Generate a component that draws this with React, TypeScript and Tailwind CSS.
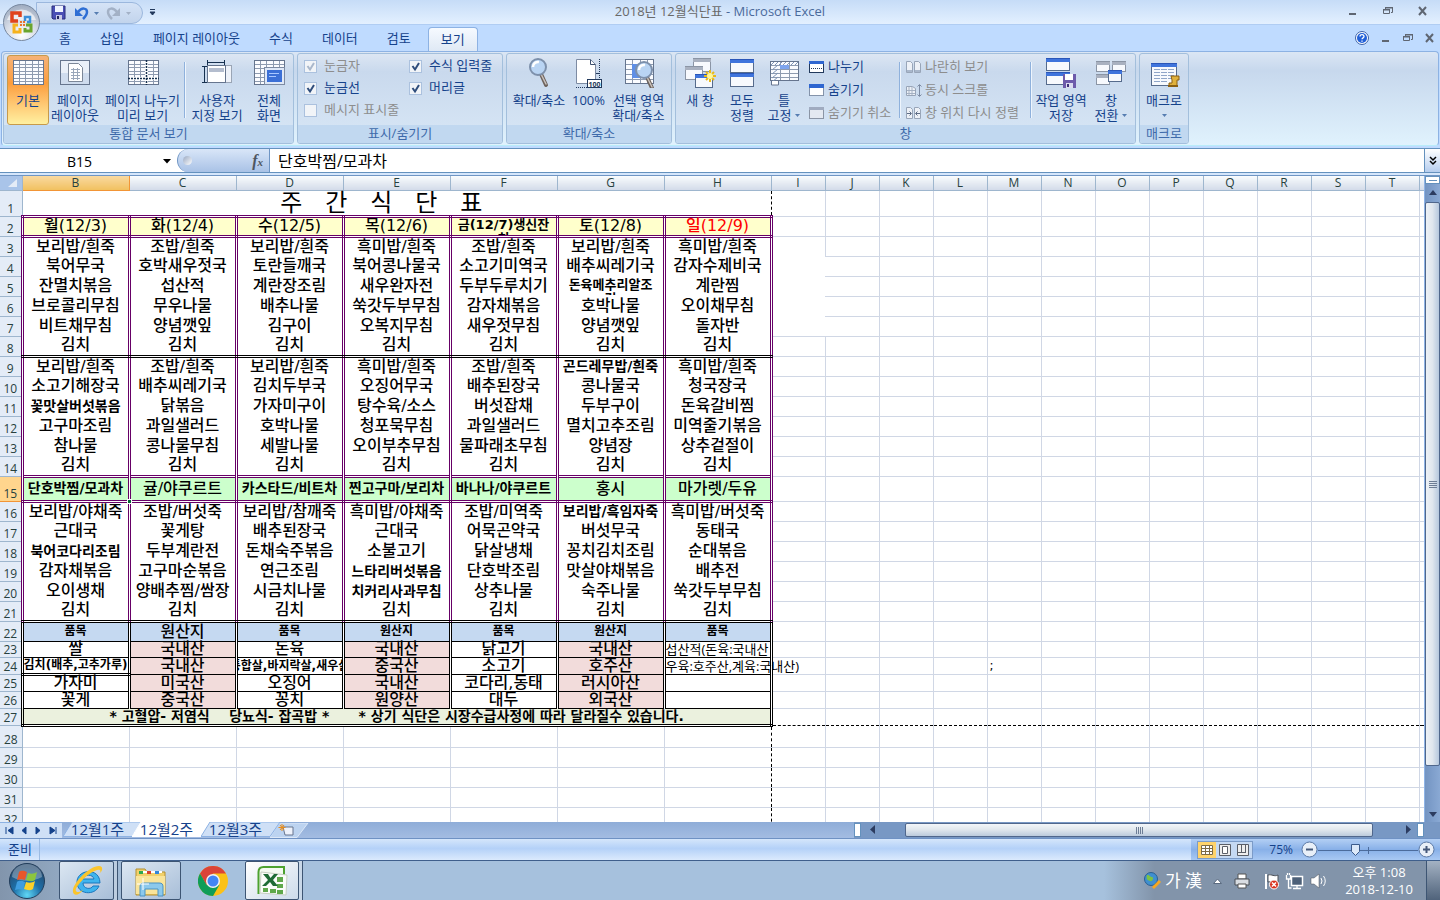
import type { ReactNode } from "react";
import clsx from "clsx";

const menuRows: Record<number, string[]> = {
  2: ["월(12/3)", "화(12/4)", "수(12/5)", "목(12/6)", "금(12/7)생신잔\n치", "토(12/8)", "일(12/9)"],
  3: ["보리밥/흰죽", "조밥/흰죽", "보리밥/흰죽", "흑미밥/흰죽", "조밥/흰죽", "보리밥/흰죽", "흑미밥/흰죽"],
  4: ["북어무국", "호박새우젓국", "토란들깨국", "북어콩나물국", "소고기미역국", "배추씨레기국", "감자수제비국"],
  5: ["잔멸치볶음", "섭산적", "계란장조림", "새우완자전", "두부두루치기", "돈육메추리알조\n림", "계란찜"],
  6: ["브로콜리무침", "무우나물", "배추나물", "쑥갓두부무침", "감자채볶음", "호박나물", "오이채무침"],
  7: ["비트채무침", "양념깻잎", "김구이", "오복지무침", "새우젓무침", "양념깻잎", "돌자반"],
  8: ["김치", "김치", "김치", "김치", "김치", "김치", "김치"],
  9: ["보리밥/흰죽", "조밥/흰죽", "보리밥/흰죽", "흑미밥/흰죽", "조밥/흰죽", "곤드레무밥/흰죽", "흑미밥/흰죽"],
  10: ["소고기해장국", "배추씨레기국", "김치두부국", "오징어무국", "배추된장국", "콩나물국", "청국장국"],
  11: ["꽃맛살버섯볶음", "닭볶음", "가자미구이", "탕수육/소스", "버섯잡채", "두부구이", "돈육갈비찜"],
  12: ["고구마조림", "과일샐러드", "호박나물", "청포묵무침", "과일샐러드", "멸치고추조림", "미역줄기볶음"],
  13: ["참나물", "콩나물무침", "세발나물", "오이부추무침", "물파래초무침", "양념장", "상추겉절이"],
  14: ["김치", "김치", "김치", "김치", "김치", "김치", "김치"],
  15: ["단호박찜/모과차", "귤/야쿠르트", "카스타드/비트차", "찐고구마/보리차", "바나나/야쿠르트", "홍시", "마가렛/두유"],
  16: ["보리밥/야채죽", "조밥/버섯죽", "보리밥/참깨죽", "흑미밥/야채죽", "조밥/미역죽", "보리밥/흑임자죽", "흑미밥/버섯죽"],
  17: ["근대국", "꽃게탕", "배추된장국", "근대국", "어묵곤약국", "버섯무국", "동태국"],
  18: ["북어코다리조림", "두부계란전", "돈채숙주볶음", "소불고기", "닭살냉채", "꽁치김치조림", "순대볶음"],
  19: ["감자채볶음", "고구마순볶음", "연근조림", "느타리버섯볶음", "단호박조림", "맛살야채볶음", "배추전"],
  20: ["오이생채", "양배추찜/쌈장", "시금치나물", "치커리사과무침", "상추나물", "숙주나물", "쑥갓두부무침"],
  21: ["김치", "김치", "김치", "김치", "김치", "김치", "김치"],
  22: ["품목", "원산지", "품목", "원산지", "품목", "원산지", "품목"],
  23: ["쌀", "국내산", "돈육", "국내산", "닭고기", "국내산", "섭산적(돈육:국내산"],
  24: ["김치(배추,고추가루)", "국내산", "통합살,바지락살,새우살", "중국산", "소고기", "호주산", "우육:호주산,계육:국내산)"],
  25: ["가자미", "미국산", "오징어", "국내산", "코다리,동태", "러시아산", ""],
  26: ["꽃게", "중국산", "꽁치", "원양산", "대두", "외국산", ""],
};

const smallCells = new Set(["9-5", "11-0", "15-0", "15-2", "15-3", "15-4", "16-5", "18-0", "19-3", "20-3"]);
const columns = "BCDEFGHIJKLMNOPQRST".split("");
const rowNumbers = Array.from({ length: 32 }, (_, i) => i + 1);

const rowHeight = (n: number) => {
  if (n === 1) return "h-[26px]";
  if (n === 15) return "h-[25px]";
  if (n === 23) return "h-[15px]";
  if (n >= 24 && n <= 27) return "h-[17px]";
  if (n === 28) return "h-[22px]";
  return "h-5";
};

const cellBorders = (n: number, c: number) =>
  clsx(
    n <= 21 && "border-x-[3px] border-x-[#660066] [border-left-style:double] [border-right-style:double]",
    n > 21 && "border-x-[3px] border-x-black [border-left-style:double] [border-right-style:double]",
    [2, 15].includes(n) && "border-y-[3px] border-y-[#660066] [border-top-style:double] [border-bottom-style:double]",
    [8, 21].includes(n) && "border-b-[3px] border-b-black [border-bottom-style:double]",
    n >= 22 && "border-b border-b-black",
    n === 24 && c === 0 && "border-b-[3px] [border-bottom-style:double]",
  );

const cellFill = (n: number, c: number) => {
  if (n === 2) return "bg-[#ffffcc]";
  if (n === 15) return "bg-[#ccffcc]";
  if (n === 22) return "bg-[#c5d9f1]";
  if (n > 22 && c % 2 === 1) return "bg-[#f2dcdb]";
  return "";
};

const cellText = (n: number, c: number) => {
  if (n === 22 && c !== 1) return "text-[12px] font-bold";
  if (n === 24 && (c === 0 || c === 2)) return "text-[12px] font-bold";
  if (n >= 23 && c === 6) return "font-['Open_Sans','Noto_Sans_CJK_KR',sans-serif] text-[13px]";
  if ((n === 2 && c === 4) || (n === 5 && c === 5)) return "text-[13px] font-bold";
  if (smallCells.has(`${n}-${c}`)) return "text-[14px] font-bold";
  return "text-[16px] font-medium";
};

const MenuCell = ({ n, c, text }: { n: number; c: number; text: string }) => {
  const wraps = text.includes("\n");
  const note = n >= 23 && c === 6;
  return (
    <td className={clsx("relative p-0", cellBorders(n, c), cellFill(n, c))}>
      <div
        className={clsx(
          "flex justify-center",
          cellText(n, c),
          n < 22 && "h-[17px]",
          n === 22 && "h-[17px] leading-[17px]",
          n > 22 && "h-[14px] leading-[14px]",
          wraps ? "overflow-hidden text-center leading-[14px] whitespace-pre" : "items-center whitespace-nowrap",
          n === 24 && c === 2 && "overflow-hidden",
          note && "!justify-start",
          n === 2 && c === 6 ? "text-[#ff0000]" : "text-black",
        )}
      >
        {text}
      </div>
      {n === 15 && c === 0 && (
        <span className="absolute -right-[4px] -bottom-[4px] z-10 size-[5px] border border-white bg-[#063]" />
      )}
    </td>
  );
};

const EmptyCell = ({ n, col }: { n: number; col: string }) => {
  const blank = col === "I" && n >= 3 && n <= 7;
  return (
    <td
      className={clsx(
        "p-0",
        !(blank && n > 3) && "border-r border-r-[#d0d7e5]",
        !(blank && n < 7) && "border-b border-b-[#d0d7e5]",
        n === 27 && "!border-b-black [border-bottom-style:dashed]",
        n > 27 && col === "H" && "!border-r-black [border-right-style:dashed]",
      )}
    >
      {n === 24 && col === "M" && <div className="h-[14px] pl-[2px] text-[12px] leading-[14px]">;</div>}
    </td>
  );
};

const Sheet = () => (
  <table className="w-full table-fixed border-collapse bg-white">
    <colgroup>
      <col className="w-[22px]" />
      {columns.map((col) => (
        <col key={col} className={col < "I" ? "w-[107px]" : "w-[54px]"} />
      ))}
      <col />
    </colgroup>
    <thead>
      <tr className="h-[14px] text-[12px] text-[#27413e]">
        <th className="border-r border-b border-[#9eb6ce] bg-[#a9c4e9] p-0" aria-label="모두 선택">
          <svg viewBox="0 0 21 13" className="block h-[13px] w-[21px]">
            <path d="M17 3v8H8z" fill="#e4ecf7" />
          </svg>
        </th>
        {columns.map((col) => (
          <th
            key={col}
            scope="col"
            className={clsx(
              "border-r border-b p-0 leading-[13px] font-normal",
              col === "B"
                ? "border-[#f29536] bg-linear-to-b from-[#f9d99f] to-[#f1c15f]"
                : "border-[#9eb6ce] bg-linear-to-b from-[#f9fcfd] to-[#d3dbe9]",
            )}
          >
            {col}
          </th>
        ))}
        <th className="border-b border-[#9eb6ce] bg-linear-to-b from-[#f9fcfd] to-[#d3dbe9] p-0" />
      </tr>
    </thead>
    <tbody className="font-['DejaVu_Sans','Noto_Sans_CJK_KR',sans-serif]">
      {rowNumbers.map((n) => (
        <tr key={n} className={rowHeight(n)}>
          <th
            scope="row"
            className={clsx(
              "border-r border-b p-0 align-bottom font-['Open_Sans',sans-serif] text-[12px] leading-[15px] font-normal text-[#27413e]",
              n === 15 ? "border-[#f29536] bg-[#ffd58d]" : "border-[#9eb6ce] bg-[#e4ecf7]",
              n === 23 && "leading-[13px]",
            )}
          >
            {n}
          </th>
          {n === 1 && (
            <td colSpan={7} className="border-r border-dashed border-r-black p-0">
              <div className="h-6 text-center text-[24px] leading-[25px] whitespace-pre">{"주   간   식   단   표    "}</div>
            </td>
          )}
          {menuRows[n]?.map((text, c) => (
            <MenuCell key={c} n={n} c={c} text={text} />
          ))}
          {n === 27 && (
            <td colSpan={7} className="border-[3px] border-t border-double border-black bg-[#ebf1de] p-0">
              <div className="h-[14px] pl-[86px] text-[14px] leading-[14px] font-bold whitespace-pre">
                {"* 고혈압- 저염식    당뇨식- 잡곡밥 *      * 상기 식단은 시장수급사정에 따라 달라질수 있습니다."}
              </div>
            </td>
          )}
          {n > 27 && columns.slice(0, 7).map((col) => <EmptyCell key={col} n={n} col={col} />)}
          {columns.slice(7).map((col) => (
            <EmptyCell key={col} n={n} col={col} />
          ))}
          <td className={clsx("border-b p-0", n === 27 ? "border-dashed border-black" : "border-[#d0d7e5]")} />
        </tr>
      ))}
    </tbody>
  </table>
);

/* ---------- icons ---------- */

const Icon = ({ children, w = 32, h = 32 }: { children: ReactNode; w?: number; h?: number }) => (
  <svg width={w} height={h} viewBox={`0 0 ${w} ${h}`} className="block shrink-0" aria-hidden="true">
    {children}
  </svg>
);

const Pane = ({ x, y, w, h, off }: { x: number; y: number; w: number; h: number; off?: boolean }) => (
  <g>
    <rect x={x + 0.5} y={y + 0.5} width={w - 1} height={h - 1} fill="#f7f9fd" stroke={off ? "#8b95a5" : "#566b8c"} />
    <rect x={x} y={y} width={w} height={4} fill={off ? "#a9b1c0" : "#3f74dc"} />
    <rect x={x} y={y} width={w} height={1} fill={off ? "#8b95a5" : "#2a56b8"} />
  </g>
);

const GridLines = ({ x, y, w, h, cols, rows }: { x: number; y: number; w: number; h: number; cols: number; rows: number }) => (
  <g stroke="#8e9bb0">
    <rect x={x + 0.5} y={y + 0.5} width={w - 1} height={h - 1} fill="#fbfcff" stroke="#66758e" />
    {Array.from({ length: cols - 1 }, (_, i) => (
      <path key={`c${i}`} d={`M${x + Math.round(((i + 1) * w) / cols) + 0.5} ${y + 1}v${h - 2}`} />
    ))}
    {Array.from({ length: rows - 1 }, (_, i) => (
      <path key={`r${i}`} d={`M${x + 1} ${y + Math.round(((i + 1) * h) / rows) + 0.5}h${w - 2}`} />
    ))}
  </g>
);

const Lens = ({ x, y }: { x: number; y: number }) => (
  <g transform={`translate(${x} ${y})`}>
    <path d="M12 16l5 11" stroke="#6d625c" strokeWidth="4" strokeLinecap="round" />
    <path d="M12 16l5 10" stroke="#c9c2bc" strokeWidth="1.5" strokeLinecap="round" />
    <circle cx="9" cy="9" r="8" fill="#b9d4f3" stroke="#7d90ab" strokeWidth="2" />
    <path d="M4 9a5 5 0 0 1 6-5" stroke="#fff" strokeWidth="2.5" fill="none" />
  </g>
);

const NormalIcon = () => (
  <Icon>
    <GridLines x={1} y={4} w={31} h={25} cols={5} rows={7} />
  </Icon>
);
const PageLayoutIcon = () => (
  <Icon>
    <rect x="1.5" y="4.500" width="29" height="24" fill="#e9eff8" stroke="#66758e" />
    <path d="M2 17h28v11H2z" fill="#cfdcee" />
    <path d="M9.500 7.500h10l4 4v14h-14z" fill="#fff" stroke="#7c8798" />
    <path d="M12 13.500h9M12 16.500h9M12 19.500h9M12 22.500h9M14.500 12v12M18.500 12v12" stroke="#9aa7ba" />
  </Icon>
);
const PageBreakIcon = () => (
  <Icon>
    <GridLines x={1} y={4} w={31} h={25} cols={5} rows={7} />
    <path d="M19.500 5v23M2 22.500h29" stroke="#fff" strokeWidth="3" />
    <path d="M19.500 4v25M1 22.500h31" stroke="#16304f" strokeWidth="1.500" strokeDasharray="2 1" />
  </Icon>
);
const CustomViewIcon = () => (
  <Icon>
    <rect x="14.500" y="9.500" width="16" height="17" fill="#eef2f9" stroke="#9aa5b5" />
    <rect x="6.500" y="9.500" width="18" height="17" fill="#fff" stroke="#66758e" />
    <path d="M8 12h15v4H8z" fill="#b4bdce" />
    <path d="M6 6.500h18M6.500 4v5M23.500 4v5M3.500 10v16M1 10.500h5M1 26.500h5" stroke="#16304f" />
  </Icon>
);
const FullScreenIcon = () => (
  <Icon>
    <GridLines x={1} y={4} w={31} h={25} cols={5} rows={6} />
    <rect x="11.500" y="11.500" width="20" height="17" fill="#dfe8f7" stroke="#7d8ba3" />
    <rect x="14" y="14" width="15" height="12" fill="#3b6fd6" />
    <path d="M16 17.500h10M16 20.500h7" stroke="#a9c7ff" />
  </Icon>
);
const ZoomIcon = () => (
  <Icon>
    <Lens x={6} y={2} />
  </Icon>
);
const HundredIcon = () => (
  <Icon>
    <path d="M26.500 3v28M3 31.500h23" stroke="#22395c" strokeDasharray="1 1" />
    <path d="M3.500 3.500h14l5 5v19h-19z" fill="#fff" stroke="#7d8ba3" />
    <path d="M17.500 3.500v5h5" fill="none" stroke="#3c5070" />
    <path d="M23 17.500h4" stroke="#22395c" />
    <rect x="14.500" y="23.500" width="14" height="8" fill="#fff" stroke="#22395c" />
    <text x="15.500" y="30.500" fontSize="7" fontWeight="bold" fill="#22395c">100</text>
  </Icon>
);
const ZoomSelectionIcon = () => (
  <Icon>
    <GridLines x={2} y={3} w={29} h={25} cols={4} rows={5} />
    <rect x="9" y="8" width="9" height="14" fill="#5f8fe6" />
    <Lens x={12} y={5} />
  </Icon>
);
const NewWindowIcon = () => (
  <Icon>
    <Pane x={9} y={2} w={18} h={14} off />
    <Pane x={1} y={10} w={18} h={14} off />
    <Pane x={11} y={18} w={18} h={14} />
    <path d="M26 14v12M20 20h12M22 16l8 8M30 16l-8 8" stroke="#e9b917" strokeWidth="2" />
    <circle cx="26" cy="20" r="3" fill="#fff79a" />
  </Icon>
);
const ArrangeIcon = () => (
  <Icon>
    <Pane x={4} y={3} w={24} h={14} />
    <Pane x={4} y={17} w={24} h={14} />
  </Icon>
);
const FreezeIcon = () => (
  <Icon>
    <GridLines x={2} y={5} w={29} h={20} cols={3} rows={5} />
    <path d="M3 9l3-3M7 9l3-3M11 9l3-3M15 9l3-3M19 9l3-3M23 9l3-3M27 9l3-3M4 14l6-5M4 18l6-5M4 22l6-5M4 26l6-5" stroke="#7f95b7" />
    <rect x="12" y="9" width="9" height="4" fill="#7ea5ee" />
    <path d="M3.500 25v4h7v-4" fill="#fff" stroke="#66758e" />
  </Icon>
);
const SaveWorkspaceIcon = () => (
  <Icon>
    <Pane x={1} y={2} w={24} h={13} />
    <Pane x={1} y={16} w={24} h={13} />
    <rect x="18" y="18" width="13" height="14" fill="#6d5bab" />
    <rect x="20" y="18" width="8" height="6" fill="#fff" />
    <rect x="21" y="27" width="7" height="5" fill="#dcdcf0" />
    <rect x="22" y="28" width="2" height="3" fill="#3d2f78" />
  </Icon>
);
const SwitchIcon = () => (
  <Icon>
    <Pane x={1} y={5} w={14} h={11} off />
    <Pane x={17} y={5} w={14} h={11} off />
    <Pane x={1} y={18} w={14} h={11} off />
    <Pane x={13} y={14} w={14} h={12} />
  </Icon>
);
const MacroIcon = () => (
  <Icon>
    <Pane x={3} y={7} w={26} h={23} />
    <path d="M6 13.500h20M6 16.500h20M6 19.500h20M6 22.500h20M6 25.500h14" stroke="#8fa5c8" strokeDasharray="6 1" />
    <path d="M23 20h8v4h-2v6h-8v-3h3v-3z" fill="#e0b13c" stroke="#8a5f12" />
    <path d="M20 30h10" stroke="#8a5f12" strokeWidth="2" />
  </Icon>
);
const SplitIcon = () => (
  <Icon w={16} h={16}>
    <rect x=".5" y="2.500" width="14" height="11" fill="#fff" stroke="#22395c" />
    <path d="M0 2h15v3H0z" fill="#2f66d0" />
    <path d="M2 9.500h11" stroke="#22395c" strokeDasharray="1 1" />
  </Icon>
);
const HideIcon = () => (
  <Icon w={16} h={16}>
    <rect x=".5" y="2.500" width="14" height="11" fill="#fff" stroke="#22395c" strokeDasharray="1 1" />
    <path d="M0 2h15v4H0z" fill="#2f66d0" />
  </Icon>
);
const UnhideIcon = () => (
  <Icon w={16} h={16}>
    <rect x=".5" y="2.500" width="14" height="11" fill="#e4e9f1" stroke="#8b95a5" />
    <path d="M0 2h15v3H0z" fill="#a0abc0" />
  </Icon>
);
const SideBySideIcon = () => (
  <Icon w={16} h={16}>
    <path d="M.5 2.500h4l2 2v9h-6zM8.500 2.500h4l2 2v9h-6z" fill="#edf1f7" stroke="#98a5b8" />
    <path d="M1 11h5v2H1zM9 11h5v2H9z" fill="#a9b7cb" />
  </Icon>
);
const SyncScrollIcon = () => (
  <Icon w={16} h={16}>
    <path d="M.5 4.500h6l3 2v7h-9z" fill="#edf1f7" stroke="#98a5b8" />
    <path d="M3 5v8M6 5v8M1 8.500h8M1 11.500h8" stroke="#a5b1c3" />
    <path d="M13.500 3v11M11.500 4.500l2-2 2 2M11.500 12.500l2 2 2-2" stroke="#7d8ba3" fill="none" />
  </Icon>
);
const ResetPositionIcon = () => (
  <Icon w={16} h={16}>
    <path d="M.5 2.500h4l2 2v9h-6zM8.500 2.500h4l2 2v9h-6z" fill="#edf1f7" stroke="#98a5b8" />
    <path d="M1 8.500h4M3.500 6.500l2 2-2 2M14 8.500h-4M11.500 6.500l-2 2 2 2" stroke="#5d6c85" fill="none" />
  </Icon>
);
const Caret = ({ color = "#567db1" }: { color?: string }) => (
  <svg width="5" height="3" viewBox="0 0 5 3" className="inline-block shrink-0" aria-hidden="true">
    <path d="M0 0h5L2.500 3z" fill={color} />
  </svg>
);

/* ---------- title bar and ribbon ---------- */

const WindowControls = ({ className }: { className: string }) => (
  <div className={clsx("flex items-center", className)}>
    <button aria-label="최소화">
      <Icon w={12} h={12}>
        <path d="M2 8h7v2H2z" fill="#5f6672" />
      </Icon>
    </button>
    <button aria-label="이전 크기로">
      <Icon w={12} h={12}>
        <path d="M3.500 4V2.500h7v5H9M1.500 4.500h6v4h-6z" fill="none" stroke="#5f6672" />
        <path d="M3 2h8v1.500H3zM1 4h7v1.500H1z" fill="#5f6672" />
      </Icon>
    </button>
    <button aria-label="닫기">
      <Icon w={12} h={12}>
        <path d="M2 2l7 8M9 2l-7 8" stroke="#5f6672" strokeWidth="2" />
      </Icon>
    </button>
  </div>
);

const TitleBar = () => (
  <div className="relative flex h-[25px] items-center justify-center border-b border-[#b0cdf3] bg-linear-to-b from-[#c6dcf7] to-[#e3f0ff]">
    <div className="absolute top-[2px] left-9 flex h-[22px] w-[107px] items-center rounded-r-full border border-[#9bb7dd] bg-linear-to-b from-[#d5e3f6] to-[#c2d4ec] pl-[14px]">
      <button aria-label="저장" className="mr-[7px]">
        <Icon w={16} h={16}>
          <path d="M1 1h13v13H2l-1-1z" fill="#4a4fb5" stroke="#2b2f7d" />
          <path d="M4 1h8v6H4z" fill="#eef3ff" />
          <path d="M5 10h6v5H5z" fill="#c9cbe6" />
          <path d="M6 11h2v3H6z" fill="#22265f" />
        </Icon>
      </button>
      <button aria-label="실행 취소" className="mr-[4px]">
        <Icon w={16} h={16}>
          <path d="M4 7c4-5 9-4 9 0 0 3-2 5-4 7" fill="none" stroke="#2f6fd4" strokeWidth="2.500" />
          <path d="M1 3v8h8z" fill="#2f6fd4" />
        </Icon>
      </button>
      <Caret />
      <button aria-label="다시 실행" className="mr-[4px] ml-[7px]">
        <Icon w={16} h={16}>
          <path d="M11 7c-4-5-9-4-9 0 0 3 2 5 4 7" fill="none" stroke="#a3b1c6" strokeWidth="2.500" />
          <path d="M14 3v8H6z" fill="#a3b1c6" />
        </Icon>
      </button>
      <Caret color="#a3b1c6" />
    </div>
    <button aria-label="빠른 실행 도구 모음 사용자 지정" className="absolute top-[9px] left-[149px]">
      <Icon w={7} h={7}>
        <path d="M1 .5h5M1 3h5L3.500 6z" stroke="#22395c" fill="#22395c" />
      </Icon>
    </button>
    <h1 className="text-[13px] text-[#4a6a9b]">
      <span className="text-[#696969]">2018년 12월식단표</span> - Microsoft Excel
    </h1>
    <WindowControls className="absolute top-[5px] right-[11px] gap-[23px]" />
    <button aria-label="Office 단추" className="absolute top-[3px] left-[2px] z-10">
      <Icon w={40} h={40}>
        <defs>
          <radialGradient id="orb" cx=".5" cy=".85" r=".8">
            <stop offset="0" stopColor="#fff" />
            <stop offset=".55" stopColor="#d5dbe6" />
            <stop offset="1" stopColor="#a4b0c3" />
          </radialGradient>
        </defs>
        <circle cx="19.500" cy="19.500" r="18" fill="url(#orb)" stroke="#76879f" />
        <path d="M5 17a15 14 0 0 1 29 0z" fill="#fff" opacity=".6" />
        <g fill="none" strokeWidth="3.500">
          <path d="M16 18h-6v-8h8v4" stroke="#e0421c" />
          <path d="M23 18v-4h5v5h-3" stroke="#3c8fd8" strokeWidth="2.500" />
          <path d="M16 22h-4v7h6v-4" stroke="#f6b21c" strokeWidth="3" />
          <path d="M23 25v3h6v-6h-5" stroke="#6aa52d" strokeWidth="3" />
        </g>
        <path d="M18 18h2v2h-2zM21 18h2v2h-2zM18 21h2v2h-2zM21 21h2v2h-2z" fill="#e8762c" />
      </Icon>
    </button>
  </div>
);

const RibbonTabs = () => (
  <div className="flex h-[26px] items-end bg-[#bfdbff] pl-[45px]">
    <nav className="flex h-6 gap-px text-[13px] text-[#15428b]">
      {["홈", "삽입", "페이지 레이아웃", "수식", "데이터", "검토"].map((label) => (
        <button key={label} className="px-[14px]">
          {label}
        </button>
      ))}
      <button className="ml-[2px] rounded-t border border-b-0 border-[#8db2e3] bg-linear-to-b from-[#f6faff] to-[#dfe9f5] px-3">보기</button>
    </nav>
    <div className="ml-auto flex h-full items-center gap-[11px] pr-1">
      <button aria-label="도움말">
        <Icon w={14} h={14}>
          <circle cx="7" cy="7" r="6.500" fill="#fff" stroke="#3d62a8" />
          <circle cx="7" cy="7" r="5" fill="#2160d8" />
          <path d="M5 5.500c0-2.500 4-2.500 4 0 0 1.500-2 1.200-2 2.800M7 9.500v1.200" stroke="#fff" strokeWidth="1.300" fill="none" />
        </Icon>
      </button>
      <WindowControls className="gap-[10px]" />
    </div>
  </div>
);

const Group = ({ label, children }: { label: string; children: ReactNode }) => (
  <section className="flex h-[91px] flex-col rounded-[3px] border border-[#a3bfdc] bg-linear-to-b from-[#dce6f3] via-[#c9d9ed] via-20% to-[#d8e7f6]">
    <div className="flex flex-1 items-start px-[3px]">{children}</div>
    <h2 className="h-[18px] rounded-b-[2px] bg-[#c1d8f0] text-center text-[13px] leading-[17px] text-[#3e6aaa]">{label}</h2>
  </section>
);

type BigProps = { icon: ReactNode; lines: string[]; width: string; active?: boolean; caret?: boolean };

const BigButton = ({ icon, lines, width, active, caret }: BigProps) => (
  <button
    className={clsx(
      "mt-px flex h-[70px] shrink-0 flex-col items-center rounded-[3px] border text-[13px] leading-[15px] whitespace-nowrap text-[#15428b]",
      active ? "border-[#c79a4b] bg-linear-to-b from-[#f5b277] via-[#fb9d3c] via-40% to-[#fff0a0]" : "border-transparent",
      width,
    )}
  >
    {icon}
    <span className="mt-[5px]">{lines[0]}</span>
    <span className="flex min-h-[15px] items-center gap-1">
      {lines[1]}
      {caret && <Caret />}
    </span>
  </button>
);

const SmallButton = ({ icon, label, disabled }: { icon: ReactNode; label: string; disabled?: boolean }) => (
  <button
    disabled={disabled}
    className={clsx("flex h-[23px] items-center gap-[3px] text-[13px] whitespace-nowrap", disabled ? "text-[#8d8d8d]" : "text-[#15428b]")}
  >
    {icon}
    {label}
  </button>
);

const Separator = () => <div className="mt-2 h-14 w-[2px] shrink-0 border-l border-[#8fb1dc] bg-[#eef5fd]" />;

const Check = ({ label, checked, disabled }: { label: string; checked?: boolean; disabled?: boolean }) => (
  <label className={clsx("flex h-[22px] items-center gap-[7px] text-[13px] whitespace-nowrap", disabled ? "text-[#8d8d8d]" : "text-[#15428b]")}>
    <span className="relative size-[13px]">
      <input
        type="checkbox"
        defaultChecked={checked}
        disabled={disabled}
        className="peer block size-[13px] appearance-none border border-[#abc1de] bg-[#f1f4f8]"
      />
      <svg viewBox="0 0 13 13" className="pointer-events-none absolute inset-0 hidden peer-checked:block">
        <path d="M3.500 6l2.500 3.500L10 3" fill="none" stroke={disabled ? "#a9b7cb" : "#2f4d7c"} strokeWidth="2" />
      </svg>
    </span>
    {label}
  </label>
);

const Ribbon = () => (
  <div className="h-[97px] bg-[#bfdbff] px-px pb-[2px]">
    <div className="flex h-[95px] items-start gap-[3px] rounded border border-[#8db2e3] border-b-[#b8ecfa] bg-linear-to-b from-[#dbe6f4] via-[#c7d8ed] via-20% to-[#e0f2fd] px-[1px] pt-px">
      <Group label="통합 문서 보기">
        <BigButton icon={<NormalIcon />} lines={["기본"]} width="w-[42px]" active />
        <BigButton icon={<PageLayoutIcon />} lines={["페이지", "레이아웃"]} width="w-[52px]" />
        <BigButton icon={<PageBreakIcon />} lines={["페이지 나누기", "미리 보기"]} width="w-[83px]" />
        <Separator />
        <BigButton icon={<CustomViewIcon />} lines={["사용자", "지정 보기"]} width="w-[62px]" />
        <BigButton icon={<FullScreenIcon />} lines={["전체", "화면"]} width="w-[42px]" />
      </Group>
      <Group label="표시/숨기기">
        <div className="grid w-[198px] grid-cols-[105px_auto] pt-px pl-[3px]">
          <Check label="눈금자" checked disabled />
          <Check label="수식 입력줄" checked />
          <Check label="눈금선" checked />
          <Check label="머리글" checked />
          <Check label="메시지 표시줄" disabled />
        </div>
      </Group>
      <Group label="확대/축소">
        <BigButton icon={<ZoomIcon />} lines={["확대/축소"]} width="w-[58px]" />
        <BigButton icon={<HundredIcon />} lines={["100%"]} width="w-[41px]" />
        <BigButton icon={<ZoomSelectionIcon />} lines={["선택 영역", "확대/축소"]} width="w-[59px]" />
      </Group>
      <Group label="창">
        <BigButton icon={<NewWindowIcon />} lines={["새 창"]} width="w-[42px]" />
        <BigButton icon={<ArrangeIcon />} lines={["모두", "정렬"]} width="w-[42px]" />
        <BigButton icon={<FreezeIcon />} lines={["틀", "고정"]} width="w-[42px]" caret />
        <div className="ml-1 w-[90px] pt-px">
          <SmallButton icon={<SplitIcon />} label="나누기" />
          <SmallButton icon={<HideIcon />} label="숨기기" />
          <SmallButton icon={<UnhideIcon />} label="숨기기 취소" disabled />
        </div>
        <Separator />
        <div className="ml-[5px] w-[124px] pt-px">
          <SmallButton icon={<SideBySideIcon />} label="나란히 보기" disabled />
          <SmallButton icon={<SyncScrollIcon />} label="동시 스크롤" disabled />
          <SmallButton icon={<ResetPositionIcon />} label="창 위치 다시 정렬" disabled />
        </div>
        <Separator />
        <BigButton icon={<SaveWorkspaceIcon />} lines={["작업 영역", "저장"]} width="w-[58px]" />
        <BigButton icon={<SwitchIcon />} lines={["창", "전환"]} width="w-[42px]" caret />
      </Group>
      <Group label="매크로">
        <BigButton icon={<MacroIcon />} lines={["매크로"]} width="w-[42px]" caret />
      </Group>
    </div>
  </div>
);

const FormulaBar = () => (
  <div className="flex h-[25px] border-y border-[#6491bd] bg-white">
    <div className="relative w-[177px]">
      <input aria-label="이름 상자" defaultValue="B15" className="h-full w-[159px] text-center text-[14px]" />
      <button aria-label="이름 목록" className="absolute top-[10px] right-[6px]">
        <Icon w={8} h={5}>
          <path d="M0 0h8L4 4.500z" fill="#000" />
        </Icon>
      </button>
    </div>
    <div className="flex w-[93px] items-center justify-between rounded-l-full border-x border-[#6f95c4] bg-linear-to-b from-[#d9e6f8] to-[#a9c2e6] pr-[6px] pl-[5px]">
      <span className="size-[9px] rounded-full bg-linear-to-br from-[#9aa9c2] to-white" />
      <button aria-label="함수 삽입" className="font-['Liberation_Serif',serif] text-[16px] leading-none font-bold text-[#4d5560] italic">
        f<span className="text-[11px]">x</span>
      </button>
    </div>
    <input aria-label="수식 입력줄" defaultValue="단호박찜/모과차" className="flex-1 pl-2 text-[16px]" />
    <button aria-label="수식 입력줄 확장" className="flex w-4 items-center justify-center border-l border-[#6491bd] bg-linear-to-b from-white to-[#b5cdee]">
      <Icon w={8} h={10}>
        <path d="M1 1l3 3 3-3M1 5l3 3 3-3" stroke="#000" strokeWidth="1.500" fill="none" />
      </Icon>
    </button>
  </div>
);

/* ---------- scroll bars, tabs and status ---------- */

const VerticalScroll = () => (
  <div className="flex w-4 shrink-0 flex-col items-center border-l border-[#8fb4e6] bg-linear-to-r from-[#7394c2] to-[#8aa9d4]">
    <div className="flex h-2 w-full items-center justify-center border border-[#6491bd] bg-white">
      <span className="h-px w-2 bg-[#6491bd]" />
    </div>
    <Icon w={10} h={18}>
      <path d="M1 11h8L5 6z" fill="#2c3c60" />
    </Icon>
    <div className="flex w-full flex-1 flex-col items-center justify-center gap-px rounded-[2px] border border-[#50678c] bg-linear-to-r from-[#eef2f6] via-[#dfe6ee] to-[#b6c8de]">
      {[0, 1, 2, 3].map((i) => (
        <span key={i} className="h-px w-2 bg-[#6d7d95]" />
      ))}
    </div>
    <div className="flex h-14 flex-col justify-end pb-1">
      <Icon w={10} h={8}>
        <path d="M1 2h8L5 7z" fill="#2c3c60" />
      </Icon>
    </div>
  </div>
);

const SheetTab = ({ label, active }: { label: string; active?: boolean }) => (
  <button className="relative h-[15px] w-[69px] text-[15px] leading-[15px] text-[#15428b]">
    <svg viewBox="0 0 80 15" className="absolute top-0 left-0 h-[15px] w-20" aria-hidden="true">
      <path d="M0 14.500L9 0h70l-10 14.500z" fill={active ? "#fff" : "#cfe0f6"} stroke={active ? "#fff" : "#8db2e3"} />
    </svg>
    <span className="relative">{label}</span>
  </button>
);

const SheetBar = () => (
  <div className="flex h-[17px] border-b border-[#6f92c4] bg-linear-to-b from-[#8fadd8] to-[#a3bce2]">
    <div className="flex w-[62px] items-center justify-around border-t border-[#8db2e3] bg-[#cfe0f6] px-[2px]">
      {["M3 4v7M10 4v7L5 7.500z", "M8 4v7L4 7.500z", "M4 4v7l4-3.500z", "M9 4v7M3 4v7l5-3.500z"].map((d, i) => (
        <button key={d} aria-label={["처음 시트", "이전 시트", "다음 시트", "마지막 시트"][i]}>
          <Icon w={12} h={15}>
            <path d={d} fill="#15428b" stroke="#15428b" />
          </Icon>
        </button>
      ))}
    </div>
    <div className="flex pl-px">
      <SheetTab label="12월1주" />
      <SheetTab label="12월2주" active />
      <SheetTab label="12월3주" />
      <button aria-label="워크시트 삽입">
        <Icon w={46} h={15}>
          <path d="M0 14.500L9 0h29l-11 14.500z" fill="#bcd3f0" stroke="#dce8f8" />
          <path d="M13 4h10v8h-8z" fill="#eef2fb" stroke="#66758e" />
          <path d="M12 1v7M8.500 4.500h7M10 2l4 5M14 2l-4 5" stroke="#e98d1c" />
        </Icon>
      </button>
    </div>
    <div className="ml-auto flex w-[586px] bg-[#7898c4]">
      <span className="my-px w-[7px] border border-[#6491bd] bg-white" />
      <Icon w={44} h={15}>
        <path d="M14 3v9L9 7.500z" fill="#2c3c60" />
      </Icon>
      <div className="my-px flex flex-1 items-center justify-center gap-px rounded-[2px] border border-[#50678c] bg-linear-to-b from-[#f3f6f9] via-[#dfe6ec] to-[#bccbdc]">
        {[0, 1, 2, 3].map((i) => (
          <span key={i} className="h-[7px] w-px bg-[#6d7d95]" />
        ))}
      </div>
      <Icon w={44} h={15}>
        <path d="M33 3v9l5-4.500z" fill="#2c3c60" />
      </Icon>
      <span className="my-px mr-[16px] w-[7px] border border-[#6491bd] bg-white" />
    </div>
  </div>
);

const StatusBar = () => (
  <div className="flex h-[22px] items-center border-b border-[#3f5f8c] bg-linear-to-b from-[#d5e6fb] via-[#b4d1f8] via-45% to-[#dbeafd] text-[13px] text-[#15428b]">
    <span className="flex h-full w-10 items-center border-r border-[#9bbbe3] pl-2">준비</span>
    <div className="ml-auto flex h-full w-[249px] items-center bg-linear-to-b from-[#b3cff4] via-[#88b0e8] via-50% to-[#a9c9f3] pl-[6px]">
      <div className="flex border border-[#7b9bc8] bg-[#c5d9f3]">
        <button aria-label="기본" className="bg-[#ffd36b] px-[2px]">
          <Icon w={14} h={16}>
            <path d="M1 3h12v10H1z" fill="#fff" />
            <path d="M1.500 3.500h11v9h-11zM5.500 3v10M9.500 3v10M1 6.500h12M1 9.500h12" fill="none" stroke="#7d6a45" />
          </Icon>
        </button>
        <button aria-label="페이지 레이아웃" className="px-[2px]">
          <Icon w={14} h={16}>
            <path d="M1.500 2.500h11v11h-11z" fill="#eee" stroke="#5b5f68" />
            <path d="M4.500 4.500h5v7h-5z" fill="#fff" stroke="#5b5f68" />
          </Icon>
        </button>
        <button aria-label="페이지 나누기 미리 보기" className="px-[2px]">
          <Icon w={14} h={16}>
            <path d="M1.500 2.500h11v11h-11zM5.500 3v7M9.500 3v7M2 10.500h8" fill="#eee" stroke="#5b5f68" />
          </Icon>
        </button>
      </div>
      <span className="w-[48px] pr-2 text-right text-[12px]">75%</span>
      <button aria-label="축소">
        <Icon w={17} h={17}>
          <circle cx="8.500" cy="8.500" r="7.500" fill="#e8eff8" stroke="#5b79a5" />
          <path d="M5 7.500h7v2H5z" fill="#44587a" />
        </Icon>
      </button>
      <div className="relative h-4 flex-1">
        <input
          type="range"
          aria-label="확대/축소 비율"
          min={10}
          max={400}
          defaultValue={75}
          className="absolute inset-0 w-full opacity-0"
        />
        <svg viewBox="0 0 100 16" className="pointer-events-none h-4 w-full" aria-hidden="true">
          <path d="M0 8.500h100M50.500 5v7" stroke="#4c6c9c" />
          <path d="M33.500 2.500h8v7l-4 4-4-4z" fill="#dce9f9" stroke="#3d5c8c" />
        </svg>
      </div>
      <button aria-label="확대" className="mr-[5px]">
        <Icon w={17} h={17}>
          <circle cx="8.500" cy="8.500" r="7.500" fill="#e8eff8" stroke="#5b79a5" />
          <path d="M5 7.500h7v2H5zM7.500 5h2v7h-2z" fill="#44587a" />
        </Icon>
      </button>
    </div>
  </div>
);

const taskButton = "flex h-[39px] items-center justify-center rounded-[2px] border border-[#3d5573] bg-linear-to-br";

const Taskbar = () => (
  <div className="flex h-[39px] items-center bg-[#a6c1dd] bg-linear-to-r from-[#8295ac] to-transparent to-10%">
    <button aria-label="시작" className="mx-[8px]">
      <Icon w={38} h={38}>
        <defs>
          <radialGradient id="start" cx=".5" cy=".9" r=".8">
            <stop offset="0" stopColor="#5fd7f5" />
            <stop offset=".5" stopColor="#1d6fa8" />
            <stop offset="1" stopColor="#264b70" />
          </radialGradient>
        </defs>
        <circle cx="19" cy="19" r="17.500" fill="url(#start)" stroke="#223d5a" />
        <path d="M4 15a15 13 0 0 1 30 0c-10 5-20 5-30 0z" fill="#fff" opacity=".3" />
        <path d="M11 10c3-2 5-1 8 0l-2 8c-3-1-5-1-8 0z" fill="#e8562a" />
        <path d="M20 11c3 1 6 1 9-1l-2 8c-3 2-6 1-9 0z" fill="#8cc63f" />
        <path d="M9 20c3-2 5-1 8 0l-2 8c-3-1-5-1-8 0z" fill="#3f9de0" />
        <path d="M18 20c3 1 6 1 9-1l-2 8c-3 2-6 1-9 0z" fill="#fcd12a" />
      </Icon>
    </button>
    <div className="flex w-[67px]">
      <button aria-label="Internet Explorer" className={clsx(taskButton, "ml-[5px] w-[55px] from-[#dce7f2] to-[#a8bed8]")}>
        <Icon w={34} h={34}>
          <path d="M30 19H13c0 6 8 7 10 3h6c-4 10-22 9-22-4S30 3 30 19zM13 15h11c-1-5-10-5-11 0z" fill="#3fb4ee" stroke="#1b76bd" />
          <path d="M4 30C-2 24 18 2 29 2c4 0 4 4 1 7 1-3 0-4-3-3C17 9 4 24 6 27c1 2 4 1 7-1-3 4-7 6-9 4z" fill="#fbc52c" />
        </Icon>
      </button>
      <span className="h-[39px] w-1 border-r border-[#3d5573] bg-[#bccde0]" />
    </div>
    <button aria-label="Windows 탐색기" className={clsx(taskButton, "w-[60px] from-[#dce7f2] to-[#a8bed8]")}>
      <Icon w={34} h={34}>
        <path d="M2 5h9l2 3h18v23H2z" fill="#f1d06b" stroke="#b38f31" />
        <path d="M5 8h9M15 8h13" stroke="#fff" strokeWidth="2" />
        <path d="M5 7h4v3H5z" fill="#2fa84f" />
        <path d="M13 7h4v3h-4z" fill="#d9402a" />
        <path d="M21 7h4v3h-4z" fill="#3387d8" />
        <path d="M2 12h29v18H2z" fill="#f9e49a" />
        <path d="M6 32v-9c0-3 1-4 4-4h15c3 0 4 1 4 4v9h-5v-7H11v7z" fill="#8cc9ec" stroke="#4b93c4" />
        <path d="M9 14v12M3 20h12" stroke="#fff" />
      </Icon>
    </button>
    <button aria-label="Chrome" className="mx-[17px]">
      <Icon w={30} h={30}>
        <circle cx="15" cy="15" r="15" fill="#fbc116" />
        <path d="M2 7.500A15 15 0 0 1 28 7.500H15L8.500 19z" fill="#db4437" />
        <path d="M2 7.500A15 15 0 0 0 15 30l6.500-11.200H8.500z" fill="#0f9d58" />
        <circle cx="15" cy="15" r="7" fill="#f1f1f1" />
        <circle cx="15" cy="15" r="5.500" fill="#4285f4" />
      </Icon>
    </button>
    <button aria-label="Microsoft Excel" className={clsx(taskButton, "w-[54px] from-white to-[#cddbea]")}>
      <Icon w={34} h={34}>
        <path d="M3.500 30V8q0-5 5-5H29v22" fill="#f4faf0" stroke="#4da22f" strokeWidth="2" />
        <path d="M6 8l26 3-1 20L5 29z" fill="#fafcf8" stroke="#c5cfc0" />
        <path d="M22 13h6v5h-6zM22 20h6v4h-6zM15 25h6v4h-6zM22 26h6v4h-6zM8 24h5v4H8z" fill="#5fa84a" />
        <path d="M8 10h5l2.500 4L19 10h4l-5 6 5 6h-5l-3-4-4 4H7l6-6z" fill="#1e6b34" />
      </Icon>
    </button>
    <span className="h-[39px] w-1 border-r border-[#3d5573] bg-[#c9d8e8]" />
    <div className="ml-auto flex h-full w-[336px] items-center bg-linear-to-r from-transparent to-[#8294aa] to-15% text-white">
      <button className="ml-10 flex items-center gap-1 text-[17px]">
        <Icon w={17} h={17}>
          <circle cx="7" cy="7" r="6.500" fill="#3f8fcf" stroke="#2b5f92" />
          <path d="M3 3c3 0 3 2 5 2s1 5-2 4-4-2-3-6z" fill="#7cc243" />
          <path d="M8 15l7-7 2 2-7 7z" fill="#f6a820" />
        </Icon>
        가 漢
      </button>
      <button aria-label="숨겨진 아이콘 표시" className="ml-[11px]">
        <Icon w={9} h={6}>
          <path d="M.5 5.500h8L4.500 1z" fill="#fff" stroke="#5b6b80" />
        </Icon>
      </button>
      <Icon w={40} h={20}>
        <path d="M16 3h8v5h-8z" fill="#fff" stroke="#555" />
        <path d="M13 8h14v6H13z" fill="#d9dde2" stroke="#4b5058" />
        <path d="M16 13h8v4h-8z" fill="#fff" stroke="#555" />
      </Icon>
      <Icon w={22} h={18}>
        <path d="M4 2v15" stroke="#fff" strokeWidth="2" />
        <path d="M6 3c4-1 6 2 10 0v7c-4 2-6-1-10 0z" fill="#fff" stroke="#4b5058" />
        <circle cx="12" cy="12.500" r="4.500" fill="#d9331f" stroke="#fff" />
        <path d="M10 10.500l4 4M14 10.500l-4 4" stroke="#fff" strokeWidth="1.500" />
      </Icon>
      <Icon w={24} h={18}>
        <path d="M7.500 4.500h11v9h-11z" fill="#4d6078" stroke="#fff" strokeWidth="1.500" />
        <path d="M9 16.500h8M13 14v2M4.500 7v9h3M2.500 3v4h4V3M3.500 1v2M5.500 1v2" stroke="#fff" strokeWidth="1.300" fill="none" />
      </Icon>
      <Icon w={22} h={18}>
        <path d="M3 6h3l5-4v14l-5-4H3z" fill="#fff" stroke="#4b5058" strokeWidth=".5" />
        <path d="M13 6q2 3 0 6M15.500 4q3.500 5 0 10" stroke="#fff" fill="none" />
      </Icon>
      <div className="ml-auto pr-[13px] text-center text-[13px] leading-[17px]">
        <div>오후 1:08</div>
        <div>2018-12-10</div>
      </div>
      <button aria-label="바탕 화면 보기" className="h-full w-[14px] border-l border-[#3d5573] bg-linear-to-b from-[#a4b2c3] to-[#50637b]" />
    </div>
  </div>
);

const App = () => (
  <div className="flex h-screen flex-col overflow-hidden bg-[#bfdbff] font-['Open_Sans','Noto_Sans_CJK_KR',sans-serif]">
    <TitleBar />
    <RibbonTabs />
    <Ribbon />
    <FormulaBar />
    <div className="h-[3px] shrink-0 border-b border-[#6f95c4] bg-[#d5e6fb]" />
    <main className="flex min-h-0 flex-1">
      <div className="min-w-0 flex-1 overflow-hidden bg-white">
        <Sheet />
      </div>
      <VerticalScroll />
    </main>
    <SheetBar />
    <StatusBar />
    <Taskbar />
  </div>
);

export default App;
